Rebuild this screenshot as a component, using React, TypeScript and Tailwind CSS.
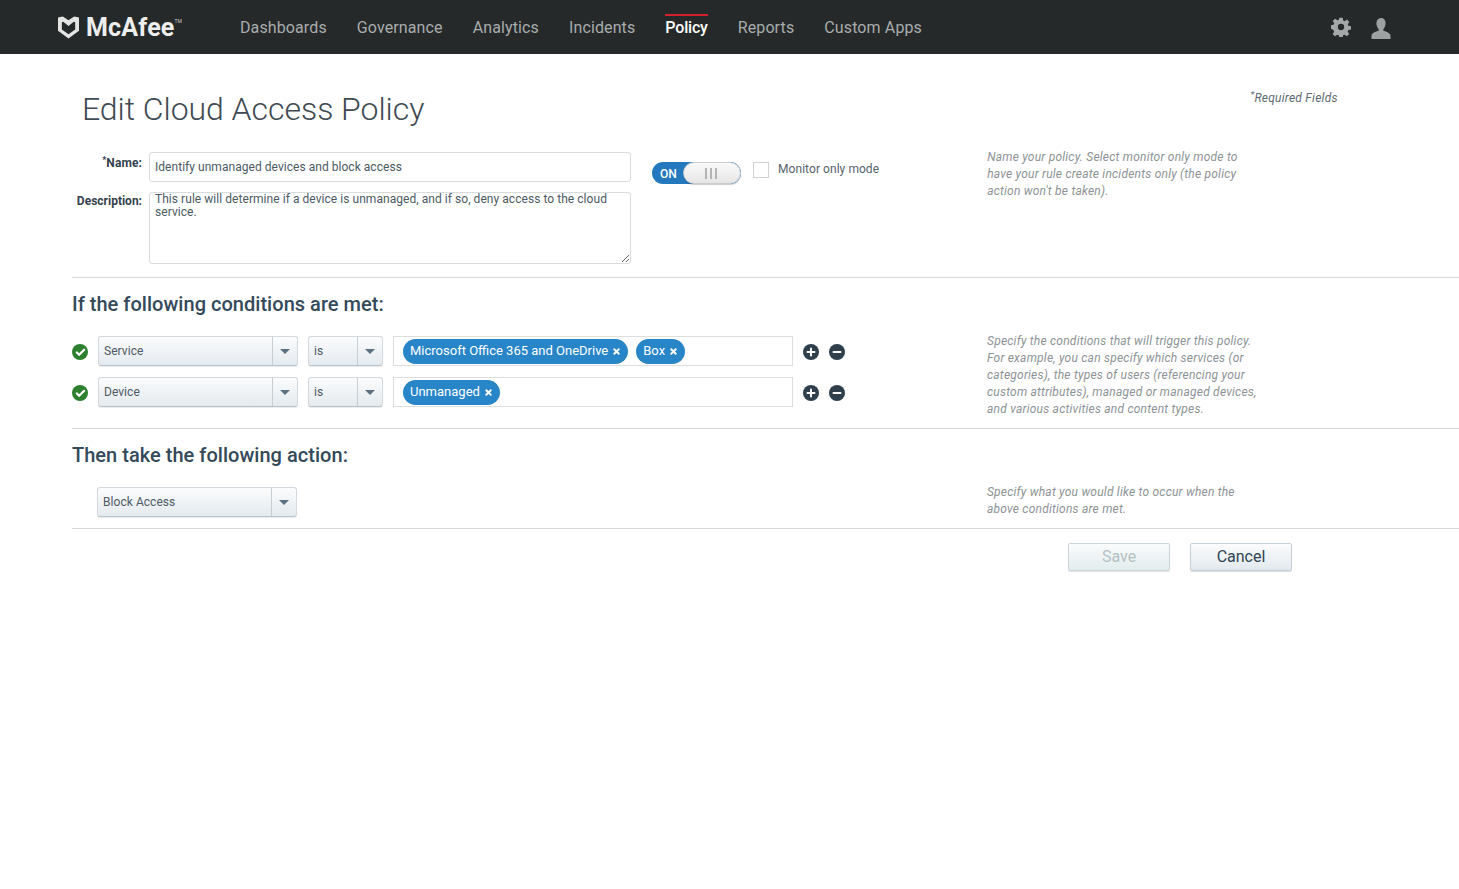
import { Check, Plus, Minus, X } from "lucide-react"

const navItems = ["Dashboards", "Governance", "Analytics", "Incidents", "Policy", "Reports", "Custom Apps"]

const Logo = () => (
  <div className="flex items-center text-white">
    <svg width="21" height="24" viewBox="0 0 22 24" className="mr-[7px]">
      <path
        fill="#e4e4e4"
        fillRule="evenodd"
        d="M0 2l5-1 6 4 6-4 5 1v14l-11 8L0 16zM4 7v7.500l7 5 7-5V7l-1.500-.5L11 11 5.500 6.500z"
      />
    </svg>
    <span className="text-[25px] font-bold tracking-[0.2px] leading-none text-[#eeeeee]">McAfee</span>
    <span className="text-[5px] self-start mt-[3px] text-[#cccccc]">TM</span>
  </div>
)

const Header = () => (
  <header className="flex h-[54px] items-center bg-[#25292a] pl-[58px] pr-[68px]">
    <Logo />
    <nav className="ml-[58px] flex h-full gap-[30px]">
      {navItems.map((item) => (
        <a
          key={item}
          className={
            item === "Policy"
              ? "mt-[14px] flex h-[26px] items-center border-t-2 border-[#d2202f] text-[16px] font-medium tracking-[-0.2px] text-white"
              : "flex items-center pt-[2px] text-[16px] tracking-[0.12px] text-[#a9adad]"
          }
        >
          {item}
        </a>
      ))}
    </nav>
    <div className="ml-auto flex items-center gap-[20px]">
      <svg width="20" height="20" viewBox="0 0 24 24" fill="#a4a8a8">
        <path
          fillRule="evenodd"
          d="M10 1h4l.6 3.200 1.900.8 2.700-1.900 2.800 2.800-1.900 2.700.8 1.900 3.100.6v4l-3.200.6-.8 1.900 1.900 2.700-2.800 2.800-2.700-1.900-1.900.8-.6 3.200h-4l-.6-3.200-1.900-.8-2.700 1.900-2.800-2.800 1.900-2.700-.8-1.900L0 14v-4l3.100-.6.8-1.900L2 4.900l2.800-2.800 2.700 1.900 1.900-.8zM12 8.200a3.800 3.800 0 1 0 0 7.600 3.800 3.800 0 0 0 0-7.600z"
        />
      </svg>
      <svg width="20" height="21" viewBox="0 0 21 22" fill="#9da1a1" className="mt-[2px]">
        <path d="M10.500 0c3 0 4.800 2.200 4.800 5.500 0 2.500-1 4.700-2.300 6v1.800c3 1 7.500 2.300 7.500 5.200V22H.5v-3.500c0-2.900 4.500-4.200 7.500-5.200v-1.800c-1.300-1.300-2.300-3.500-2.300-6C5.700 2.200 7.500 0 10.500 0z" />
      </svg>
    </div>
  </header>
)

const HelpText = ({ lines, className }: { lines: string[]; className: string }) => (
  <p className={`w-[290px] text-[12px] italic leading-[17px] tracking-[0.22px] text-[#8d9396] ${className}`}>
    {lines.map((line) => (
      <span key={line} className="block whitespace-nowrap">
        {line}
      </span>
    ))}
  </p>
)

const Select = ({ label, width }: { label: string; width: string }) => (
  <div
    className={`flex h-[30px] items-stretch rounded-[3px] border border-[#d3d9dd] border-b-[#b9c3ca] bg-gradient-to-b from-[#fbfcfd] to-[#e4eaef] shadow-[0_1px_1px_rgba(0,0,0,0.08)] ${width}`}
  >
    <span className="flex flex-1 items-center pl-[5px] text-[12px] tracking-[0.05px] text-[#4d5a63]">{label}</span>
    <span className="flex w-[25px] items-center justify-center border-l border-[#c6ced4]">
      <span className="h-0 w-0 border-x-[5px] border-t-[5px] border-x-transparent border-t-[#5d7080]" />
    </span>
  </div>
)

const Tag = ({ label }: { label: string }) => (
  <span className="flex h-[25px] items-center gap-[4px] rounded-full bg-[#2785c8] pl-[7px] pr-[7px] text-[13px] text-white">
    {label}
    <X size={9} strokeWidth={5} />
  </span>
)

const RoundIcon = ({ children, bg }: { children: React.ReactNode; bg: string }) => (
  <span className={`flex h-[16px] w-[16px] items-center justify-center rounded-full text-white ${bg}`}>{children}</span>
)

const ConditionRow = ({ field, tags }: { field: string; tags: string[] }) => (
  <div className="flex items-center">
    <div className="pt-[2px]">
      <RoundIcon bg="bg-[#2d8030]">
        <Check size={11} strokeWidth={5} />
      </RoundIcon>
    </div>
    <Select label={field} width="ml-[10px] w-[200px]" />
    <Select label="is" width="ml-[10px] w-[75px]" />
    <div className="ml-[10px] flex h-[30px] w-[400px] items-center gap-[8px] border border-[#dedede] pl-[9px]">
      {tags.map((tag) => (
        <Tag key={tag} label={tag} />
      ))}
    </div>
    <div className="ml-[10px] flex gap-[10px] pt-[2px]">
      <RoundIcon bg="bg-[#2f3f4c]">
        <Plus size={12} strokeWidth={4} />
      </RoundIcon>
      <RoundIcon bg="bg-[#2f3f4c]">
        <Minus size={12} strokeWidth={4} />
      </RoundIcon>
    </div>
  </div>
)

const Toggle = () => (
  <div className="flex h-[22px] w-[89px] items-center rounded-full bg-[#2478bd]">
    <span className="w-[31px] pl-[8px] pt-[1px] text-[12px] font-medium text-white">ON</span>
    <span className="flex h-[22px] flex-1 items-center justify-center gap-[3px] rounded-full border border-[#c9cdd0] bg-gradient-to-b from-[#fafafa] to-[#e6e6e6] pr-[2px] shadow-[0_1px_1px_rgba(0,0,0,0.2)]">
      <i className="h-[11px] w-[2px] bg-[#b4b4b4]" />
      <i className="h-[11px] w-[2px] bg-[#b4b4b4]" />
      <i className="h-[11px] w-[2px] bg-[#b4b4b4]" />
    </span>
  </div>
)

const App = () => {
  return (
    <div className="min-h-[889px] bg-white font-['Roboto',sans-serif]">
      <Header />
      <main className="pl-[72px]">
        <div className="flex items-start">
          <h1 className="ml-[10px] mt-[33px] text-[32px] font-light leading-[44px] tracking-[-0.04px] text-[#3f4a52]">
            Edit Cloud Access Policy
          </h1>
          <p className="ml-[826px] mt-[35px] text-[12px] italic tracking-[0.25px] text-[#5f6b73]">
            <sup className="text-[9px]">*</sup>Required Fields
          </p>
        </div>

        <section className="flex h-[147px] border-b border-[#d5d9db] pt-[21px]">
          <div className="flex flex-col gap-[10px]">
            <div className="flex">
              <label className="w-[70px] pt-[2px] text-right text-[12px] font-bold tracking-[0.1px] text-[#34424d]">
                <sup className="text-[9px]">*</sup>Name:
              </label>
              <input
                readOnly
                value="Identify unmanaged devices and block access"
                className="ml-[7px] h-[30px] w-[482px] rounded-[3px] border border-[#d8dcde] px-[5px] text-[12px] tracking-[0.04px] text-[#4d5a63] outline-none"
              />
            </div>
            <div className="flex">
              <label className="w-[70px] text-right text-[12px] font-bold text-[#34424d]">Description:</label>
              <textarea
                readOnly
                value="This rule will determine if a device is unmanaged, and if so, deny access to the cloud service."
                className="ml-[7px] h-[72px] w-[482px] rounded-[3px] border border-[#d8dcde] px-[5px] text-[12px] leading-[13px] tracking-[0.05px] text-[#4d5a63] outline-none"
              />
            </div>
          </div>
          <div className="ml-[21px] mt-[10px] flex items-start">
            <Toggle />
            <span className="ml-[12px] h-[16px] w-[16px] border border-[#d0d4d6] bg-white" />
            <span className="ml-[9px] text-[12px] leading-[14px] tracking-[0.06px] text-[#56626a]">
              Monitor only mode
            </span>
          </div>
          <HelpText
            className="ml-[108px] -mt-[3px]"
            lines={[
              "Name your policy. Select monitor only mode to",
              "have your rule create incidents only (the policy",
              "action won't be taken).",
            ]}
          />
        </section>

        <section className="flex h-[151px] border-b border-[#d5d9db]">
          <div>
            <h2 className="pt-[13px] text-[20px] font-medium leading-[26px] tracking-[0.03px] text-[#34495a]">
              If the following conditions are met:
            </h2>
            <div className="mt-[19px] flex flex-col gap-[11px]">
              <ConditionRow field="Service" tags={["Microsoft Office 365 and OneDrive", "Box"]} />
              <ConditionRow field="Device" tags={["Unmanaged"]} />
            </div>
          </div>
          <HelpText
            className="ml-[142px] mt-[55px]"
            lines={[
              "Specify the conditions that will trigger this policy.",
              "For example, you can specify which services (or",
              "categories), the types of users (referencing your",
              "custom attributes), managed or managed devices,",
              "and various activities and content types.",
            ]}
          />
        </section>

        <section className="flex h-[100px] border-b border-[#d5d9db]">
          <div>
            <h2 className="pt-[13px] text-[20px] font-medium leading-[26px] tracking-[0.03px] text-[#34495a]">
              Then take the following action:
            </h2>
            <Select label="Block Access" width="ml-[25px] mt-[19px] w-[200px]" />
          </div>
          <HelpText
            className="ml-[639px] mt-[55px]"
            lines={["Specify what you would like to occur when the", "above conditions are met."]}
          />
        </section>

        <div className="ml-[996px] mt-[14px] flex gap-[20px]">
          <button className="h-[28px] w-[102px] rounded-[2px] border border-[#ccd6da] bg-gradient-to-b from-[#fafcfc] to-[#e2ecee] text-[16px] text-[#b5c0c4] shadow-[0_1px_1px_rgba(0,0,0,0.12)]">
            Save
          </button>
          <button className="h-[28px] w-[102px] rounded-[2px] border border-[#c6d0d6] bg-gradient-to-b from-[#fbfcfd] to-[#e2e9ee] text-[16px] text-[#2f4453] shadow-[0_1px_1px_rgba(0,0,0,0.15)]">
            Cancel
          </button>
        </div>
      </main>
    </div>
  )
}

export default App
